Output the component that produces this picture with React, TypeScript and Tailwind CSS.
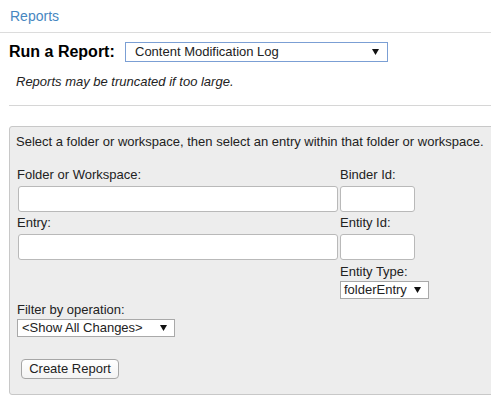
import React from "react";

function Arrow() {
  return (
    <svg width="7" height="6" viewBox="0 0 7 6" className="shrink-0">
      <path d="M0 0 H7 L3.5 6 Z" fill="#111" />
    </svg>
  );
}

function FakeSelect({
  value,
  className,
}: {
  value: string;
  className: string;
}) {
  return (
    <div
      className={
        "flex items-center justify-between bg-white border text-[13px] leading-[16px] text-[#222] " +
        className
      }
    >
      <span>{value}</span>
      <Arrow />
    </div>
  );
}

function FieldLabel({ text }: { text: string }) {
  return <div className="h-[18px] leading-[18px] text-[13px] text-[#222]">{text}</div>;
}

function TextBox({ width }: { width: string }) {
  return (
    <input
      type="text"
      className={
        "block h-[26px] bg-white border border-[#b9b9b9] rounded-[3px] outline-none " + width
      }
    />
  );
}

export default function App() {
  return (
    <div className="w-[491px] h-[397px] overflow-hidden bg-white font-['Liberation_Sans',Arial,sans-serif] text-[#222]">
      <div className="h-[33px] border-b border-[#dcdcdc] pl-[10px] pt-[7px] text-[14px] leading-[18px] text-[#4787c1]">
        Reports
      </div>

      <div className="flex items-center mt-[9px] pl-[9px] h-[20px]">
        <span className="w-[116px] text-[16px] font-bold leading-[20px] text-black">
          Run a Report:
        </span>
        <FakeSelect
          value="Content Modification Log"
          className="w-[263px] h-[20px] border-[#7b9fd4] pl-[9px] pr-[8px]"
        />
      </div>

      <p className="mt-[12px] pl-[16px] text-[13px] italic leading-[15px]">
        Reports may be truncated if too large.
      </p>

      <div className="ml-[9px] mt-[16px] border-t border-[#d6d6d6]" />

      <div className="ml-[9px] mt-[20px] w-[500px] h-[269px] border border-[#c8c8c8] rounded-[3px] bg-[#ededed] pl-[6px] pt-[7px]">
        <p className="text-[13px] leading-[15px] whitespace-nowrap">
          Select a folder or workspace, then select an entry within that folder or workspace.
        </p>

        <div className="grid grid-cols-[323px_1fr] pl-[1px] mt-[17px]">
          <div>
            <FieldLabel text="Folder or Workspace:" />
            <div className="mt-[2px] mb-[2px] ml-[1px]">
              <TextBox width="w-[320px]" />
            </div>
            <FieldLabel text="Entry:" />
            <div className="mt-[2px] ml-[1px]">
              <TextBox width="w-[320px]" />
            </div>
          </div>
          <div>
            <FieldLabel text="Binder Id:" />
            <div className="mt-[2px] mb-[2px]">
              <TextBox width="w-[75px]" />
            </div>
            <FieldLabel text="Entity Id:" />
            <div className="mt-[2px]">
              <TextBox width="w-[75px]" />
            </div>
            <div className="mt-[3px]">
              <FieldLabel text="Entity Type:" />
            </div>
            <FakeSelect
              value="folderEntry"
              className="w-[89px] h-[18px] border-[#a9a9a9] pl-[3px] pr-[7px]"
            />
          </div>
        </div>

        <div className="pl-[1px] mt-[2px]">
          <FieldLabel text="Filter by operation:" />
          <FakeSelect
            value="<Show All Changes>"
            className="w-[158px] h-[18px] border-[#a9a9a9] pl-[4px] pr-[7px]"
          />
          <button className="mt-[22px] ml-[4px] h-[20px] w-[98px] rounded-[4px] border border-[#a6a6a6] bg-gradient-to-b from-white to-[#f3f3f3] text-[13px] leading-[18px] text-[#222]">
            Create Report
          </button>
        </div>
      </div>
    </div>
  );
}
